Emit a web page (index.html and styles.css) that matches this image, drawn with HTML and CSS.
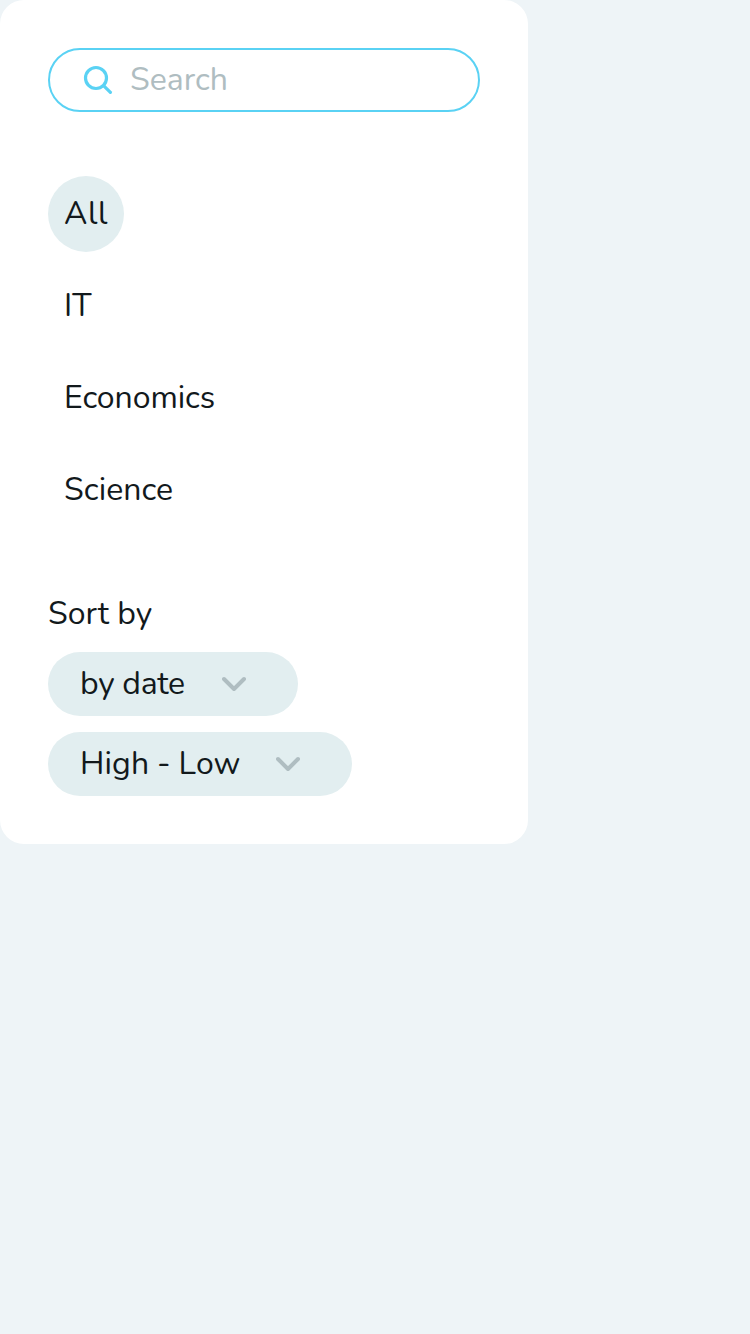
FILE: index.html
```html
<!DOCTYPE html>
<html lang="en">
<head>
<meta charset="utf-8">
<title>Courses filter</title>
<link rel="stylesheet" href="styles.css">
</head>
<body>
<aside class="panel">
  <label class="search">
    <svg class="search-icon" viewBox="0 0 32 32"><circle cx="14" cy="14" r="10.5"/><path d="M21.8 21.8L28.4 28.4"/></svg>
    <span class="search-text">Search</span>
  </label>
  <nav class="categories">
    <a class="category active"><span class="text w-all">All</span></a>
    <a class="category"><span class="text w-it">IT</span></a>
    <a class="category"><span class="text w-economics">Economics</span></a>
    <a class="category"><span class="text w-science">Science</span></a>
  </nav>
  <section class="sort">
    <div class="sort-title"><span class="text w-sort">Sort by</span></div>
    <button class="select select-date"><span class="text w-date">by date</span><svg class="chevron" viewBox="0 0 24 16"><path d="M2 3L12 13L22 3"/></svg></button>
    <button class="select select-order"><span class="text w-order">High - Low</span><svg class="chevron" viewBox="0 0 24 16"><path d="M2 3L12 13L22 3"/></svg></button>
  </section>
</aside>
</body>
</html>
```
FILE: styles.css
```css
* { box-sizing: border-box; }
body { margin: 0; min-height: 100vh; background: #eef4f7; color: #12191c; font: 32px/44px Nunito, Lato, sans-serif; }
.panel { width: 528px; height: 844px; padding: 48px; background: #fff; border-radius: 24px; }
.search { display: flex; align-items: center; height: 64px; padding-left: 32px; border: 2px solid #5ad2f4; border-radius: 32px; color: #afbdc1; }
.search-icon { width: 32px; height: 32px; margin-right: 16px; fill: none; stroke: #5ad2f4; stroke-width: 3.2; stroke-linecap: round; }
.categories { display: flex; flex-direction: column; align-items: flex-start; gap: 16px; margin-top: 64px; }
.category { height: 76px; padding: 16px; border-radius: 38px; }
.active { width: 76px; background: #e2eef0; }
.text { display: block; white-space: nowrap; }
.w-all { letter-spacing: 0.6px; }
.w-economics { letter-spacing: -0.08px; }
.w-science { letter-spacing: 0.08px; }
.w-date { letter-spacing: -0.28px; }
.w-order { letter-spacing: 0.16px; word-spacing: -0.7px; }
.sort { display: flex; flex-direction: column; align-items: flex-start; margin-top: 64px; }
.sort-title { margin-bottom: 16px; }
.select { display: flex; align-items: center; justify-content: space-between; height: 64px; margin: 0 0 16px; padding: 0 52px 0 32px; border: 0; border-radius: 32px; background: #e2eef0; color: inherit; font: inherit; }
.select-date { width: 250px; }
.select-order { width: 304px; }
.w-date, .w-order { line-height: 44px; }
.chevron { width: 24px; height: 16px; fill: none; stroke: #afbdc1; stroke-width: 4; stroke-linecap: round; stroke-linejoin: round; }
```
